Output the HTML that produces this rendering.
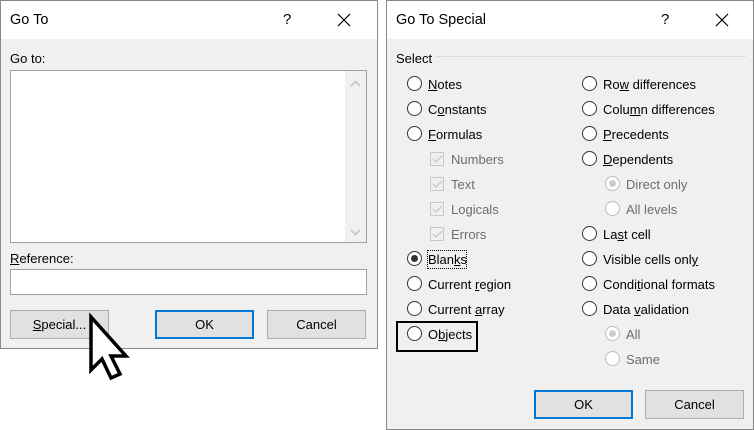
<!DOCTYPE html><html><head><style>
*{box-sizing:border-box;margin:0;padding:0}
body{width:754px;height:430px;background:#fff;position:relative;font-family:"Liberation Sans",sans-serif;font-size:12.5px;color:#000;overflow:hidden}
.a{position:absolute}
.dlg{position:absolute;background:#f0f0f0;border:1px solid #888}
.tb{position:absolute;left:0;top:0;right:0;height:38px;background:#fff}
.ttl{position:absolute;left:9px;top:11px;font-size:14.5px}
.btn{position:absolute;height:29px;background:#e1e1e1;border:1px solid #adadad;text-align:center;line-height:28px;font-size:13px}
.ok{border:2px solid #0078d7;line-height:26px}
.box{position:absolute;background:#fff;border:1px solid #a0a0a0}
.r{position:absolute;width:15px;height:15px;border:1px solid #333;border-radius:50%;background:#fff}
.rd{border-color:#bcbcbc;background:#fff}
.rd.f::after{content:"";position:absolute;left:3px;top:3px;width:7px;height:7px;border-radius:50%;background:#ccc}
.r.s::after{content:"";position:absolute;left:3px;top:3px;width:7px;height:7px;border-radius:50%;background:#333}
.cb{position:absolute;width:14px;height:14px;border:1px solid #c8c8c8;background:#f0f0f0}
.t{position:absolute;font-size:13px;white-space:nowrap;margin-top:1px}
.g{color:#6d6d6d}
u{text-decoration:underline}
</style></head><body>
<div class="dlg" style="left:0;top:0;width:378px;height:349px">
<div class="tb"></div><div class="ttl">Go To</div>
<div class="a" style="left:282px;top:10px;font-size:15px">?</div>
<svg class="a" style="left:336px;top:12px" width="14" height="14"><path d="M1 1L13 13M13 1L1 13" stroke="#000" stroke-width="1.2"/></svg>
<div class="t" style="left:9px;top:49px">Go to:</div>
<div class="box" style="left:9px;top:69px;width:357px;height:173px"><div class="a" style="right:0;top:0;width:21px;height:171px;background:#f0f0f0"></div>
<svg class="a" style="right:5px;top:9px" width="11" height="7"><path d="M1 6L5.5 1.5L10 6" stroke="#c0c0c0" fill="none" stroke-width="1.5"/></svg>
<svg class="a" style="right:5px;bottom:6px" width="11" height="7"><path d="M1 1L5.5 5.5L10 1" stroke="#c0c0c0" fill="none" stroke-width="1.5"/></svg></div>
<div class="t" style="left:9px;top:249px"><u>R</u>eference:</div>
<div class="box" style="left:9px;top:268px;width:357px;height:26px"></div>
<div class="btn" style="left:9px;top:309px;width:99px"><u>S</u>pecial...</div>
<div class="btn ok" style="left:154px;top:309px;width:99px">OK</div>
<div class="btn" style="left:266px;top:309px;width:99px">Cancel</div>
</div>
<svg class="a" style="left:85px;top:312px" width="50" height="72"><path d="M6 5L6 58L17 47L26 66L35 62L26 44L41 44Z" fill="#fff" stroke="#000" stroke-width="3.5" stroke-linejoin="miter"/></svg>

<div class="dlg" style="left:386px;top:0;width:368px;height:430px">
<div class="tb"></div><div class="ttl">Go To Special</div>
<div class="a" style="left:274px;top:10px;font-size:15px">?</div>
<svg class="a" style="left:328px;top:12px" width="14" height="14"><path d="M1 1L13 13M13 1L1 13" stroke="#000" stroke-width="1.2"/></svg>
<div class="t" style="left:9px;top:49px">Select</div>
<div class="a" style="left:49px;top:55px;width:310px;height:1px;background:#dcdcdc"></div>
</div>
<div class="a" style="left:396px;top:321px;width:82px;height:31px;border:2px solid #000"></div>
<div class="a" style="left:427px;top:250px;width:40px;height:19px;border:1px dotted #000"></div>

<div class="r" style="left:407px;top:76px"></div><div class="t" style="left:428px;top:76px"><u>N</u>otes</div>
<div class="r" style="left:407px;top:101px"></div><div class="t" style="left:428px;top:101px">C<u>o</u>nstants</div>
<div class="r" style="left:407px;top:126px"></div><div class="t" style="left:428px;top:126px"><u>F</u>ormulas</div>
<div class="r s" style="left:407px;top:251px"></div><div class="t" style="left:428px;top:251px">Blan<u>k</u>s</div>
<div class="r" style="left:407px;top:276px"></div><div class="t" style="left:428px;top:276px">Current <u>r</u>egion</div>
<div class="r" style="left:407px;top:301px"></div><div class="t" style="left:428px;top:301px">Current <u>a</u>rray</div>
<div class="r" style="left:407px;top:326px"></div><div class="t" style="left:428px;top:326px">O<u>b</u>jects</div>

<div class="cb" style="left:430px;top:152px"></div><div class="t g" style="left:451px;top:151px">Numbers</div>
<div class="cb" style="left:430px;top:177px"></div><div class="t g" style="left:451px;top:176px">Text</div>
<div class="cb" style="left:430px;top:202px"></div><div class="t g" style="left:451px;top:201px">Logicals</div>
<div class="cb" style="left:430px;top:227px"></div><div class="t g" style="left:451px;top:226px">Errors</div>
<svg class="a" style="left:430px;top:152px" width="15" height="90"><g stroke="#c8c8c8" fill="none" stroke-width="1.3"><path d="M3 7L6 10L12 4"/><path d="M3 32L6 35L12 29"/><path d="M3 57L6 60L12 54"/><path d="M3 82L6 85L12 79"/></g></svg>

<div class="r" style="left:582px;top:76px"></div><div class="t" style="left:603px;top:76px">Ro<u>w</u> differences</div>
<div class="r" style="left:582px;top:101px"></div><div class="t" style="left:603px;top:101px">Colu<u>m</u>n differences</div>
<div class="r" style="left:582px;top:126px"></div><div class="t" style="left:603px;top:126px"><u>P</u>recedents</div>
<div class="r" style="left:582px;top:151px"></div><div class="t" style="left:603px;top:151px"><u>D</u>ependents</div>
<div class="r rd f" style="left:605px;top:176px"></div><div class="t g" style="left:626px;top:176px">Direct only</div>
<div class="r rd" style="left:605px;top:201px"></div><div class="t g" style="left:626px;top:201px">All levels</div>
<div class="r" style="left:582px;top:226px"></div><div class="t" style="left:603px;top:226px">La<u>s</u>t cell</div>
<div class="r" style="left:582px;top:251px"></div><div class="t" style="left:603px;top:251px">Visible cells onl<u>y</u></div>
<div class="r" style="left:582px;top:276px"></div><div class="t" style="left:603px;top:276px">Condi<u>t</u>ional formats</div>
<div class="r" style="left:582px;top:301px"></div><div class="t" style="left:603px;top:301px">Data <u>v</u>alidation</div>
<div class="r rd f" style="left:605px;top:326px"></div><div class="t g" style="left:626px;top:326px">All</div>
<div class="r rd" style="left:605px;top:351px"></div><div class="t g" style="left:626px;top:351px">Same</div>

<div class="btn ok" style="left:534px;top:390px;width:99px">OK</div>
<div class="btn" style="left:645px;top:390px;width:99px">Cancel</div>
</body></html>
